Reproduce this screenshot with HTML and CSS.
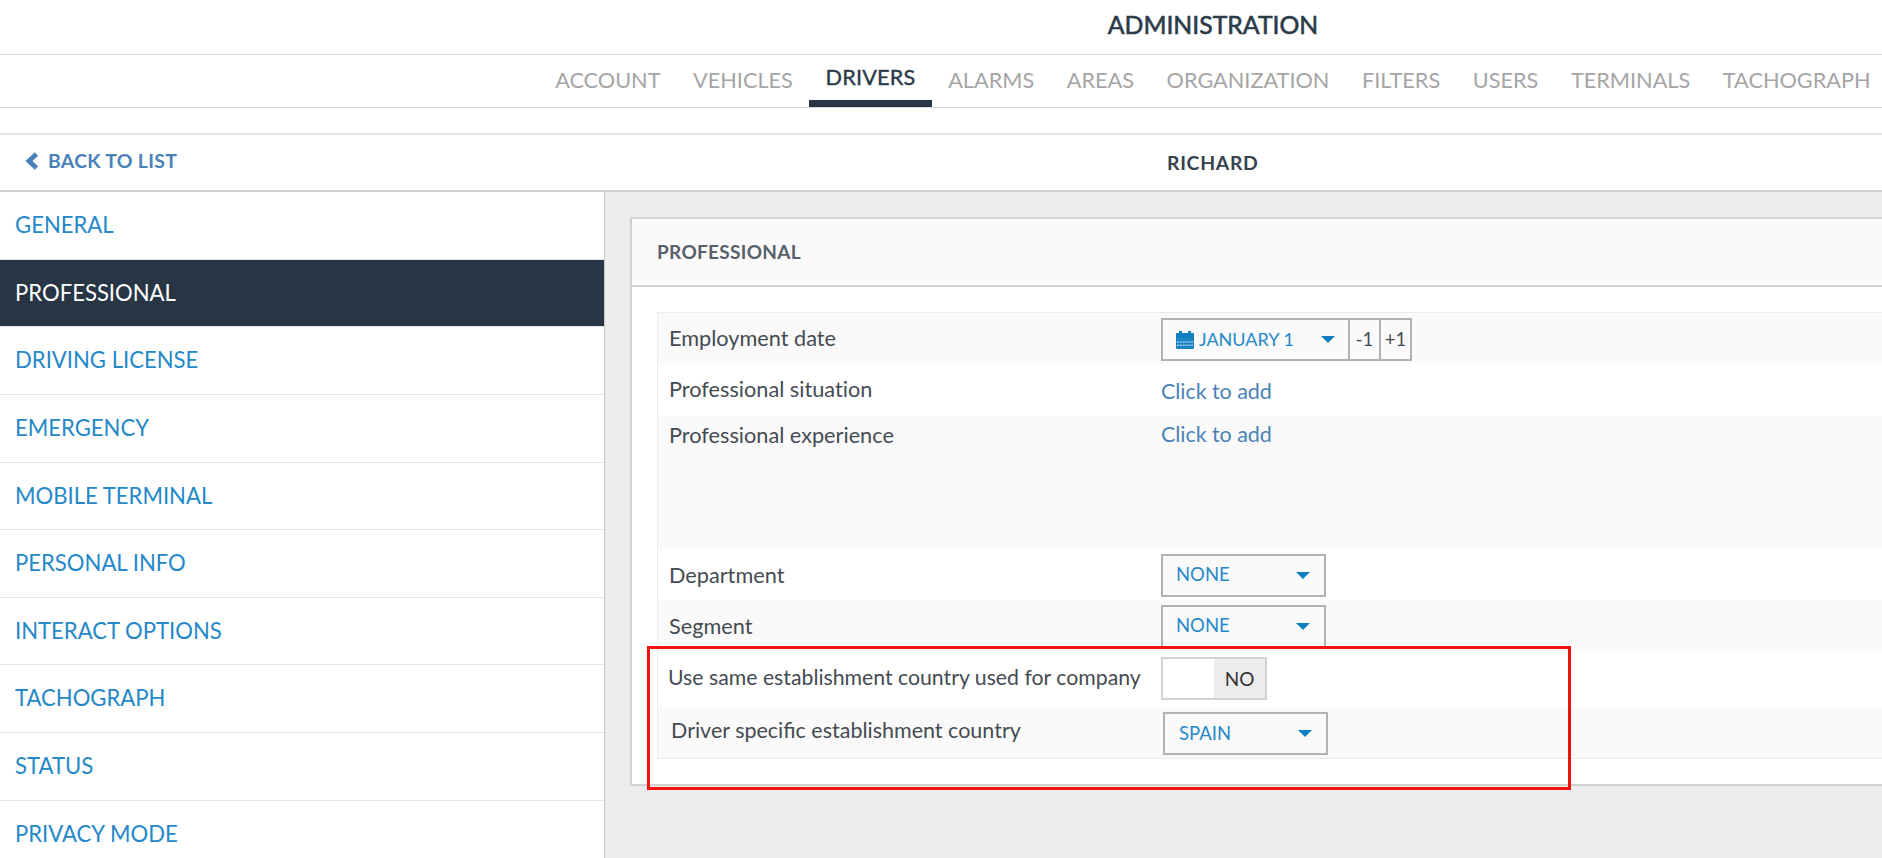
FILE: index.html
```html
<!DOCTYPE html>
<html lang="en">

<head>
    <meta charset="UTF-8">
    <meta name="viewport" content="width=device-width, initial-scale=1.0">
    <title>Administration</title>
    <link rel="stylesheet" href="styles.css">
</head>

<body>
    <header class="page-title">
        <h1>ADMINISTRATION</h1>
    </header>

    <nav class="tabs">
        <a class="tab">ACCOUNT</a>
        <a class="tab">VEHICLES</a>
        <a class="tab active">DRIVERS</a>
        <a class="tab">ALARMS</a>
        <a class="tab">AREAS</a>
        <a class="tab">ORGANIZATION</a>
        <a class="tab">FILTERS</a>
        <a class="tab">USERS</a>
        <a class="tab">TERMINALS</a>
        <a class="tab">TACHOGRAPH</a>
    </nav>

    <div class="sub-header">
        <a class="back">
            <svg class="back-icon" width="14" height="18" viewBox="0 0 14 18">
                <path d="M11.500 2L4 9l7.500 7" fill="none" stroke="currentColor" stroke-width="4.800"/>
            </svg>
            BACK TO LIST
        </a>
        <h2>RICHARD</h2>
    </div>

    <div class="main">
        <ul class="sidebar">
            <li>GENERAL</li>
            <li class="active">PROFESSIONAL</li>
            <li>DRIVING LICENSE</li>
            <li>EMERGENCY</li>
            <li>MOBILE TERMINAL</li>
            <li>PERSONAL INFO</li>
            <li>INTERACT OPTIONS</li>
            <li>TACHOGRAPH</li>
            <li>STATUS</li>
            <li>PRIVACY MODE</li>
        </ul>

        <div class="content">
            <section class="panel">
                <h3>PROFESSIONAL</h3>
                <div class="panel-body">
                    <div class="fields">
                        <div class="row row-date">
                            <div class="label">Employment date</div>
                            <div class="date">
                                <div class="date-value">
                                    <svg class="calendar" width="18" height="18" viewBox="0 0 18 18">
                                        <path d="M1 2h2V0h3v2h6V0h3v2h2q1 0 1 1v4H0V3q0-1 1-1z" fill="#0f80bf"/>
                                        <path d="M0 6.500h18V17q0 1-1 1H1q-1 0-1-1z" fill="#1a84c2"/>
                                        <path d="M1 11h16M1 14.200h16" stroke="#cfe5f3" stroke-width="1" stroke-dasharray="2 .8"/>
                                    </svg>
                                    <span>JANUARY 1</span>
                                    <i class="caret"></i>
                                </div>
                                <div class="step">-1</div>
                                <div class="step">+1</div>
                            </div>
                        </div>
                        <div class="row row-situation">
                            <div class="label">Professional situation</div>
                            <a class="add">Click to add</a>
                        </div>
                        <div class="row row-experience">
                            <div class="label">Professional experience</div>
                            <a class="add">Click to add</a>
                        </div>
                        <div class="row">
                            <div class="label">Department</div>
                            <div class="select"><span>NONE</span><i class="caret"></i></div>
                        </div>
                        <div class="row">
                            <div class="label">Segment</div>
                            <div class="select"><span>NONE</span><i class="caret"></i></div>
                        </div>
                        <div class="row row-same">
                            <div class="label">Use same establishment country used for company</div>
                            <div class="toggle"><span>NO</span></div>
                        </div>
                        <div class="row row-country">
                            <div class="label">Driver specific establishment country</div>
                            <div class="select"><span>SPAIN</span><i class="caret"></i></div>
                        </div>
                    </div>
                </div>
                <div class="highlight"></div>
            </section>
        </div>
    </div>
</body>

</html>
```
FILE: styles.css
```css
* {
    box-sizing: border-box;
}

body {
    margin: 0;
    height: 858px;
    overflow: hidden;
    display: flex;
    flex-direction: column;
    font-family: Lato, "Open Sans", sans-serif;
    background-color: #fff;
    color: #444b52;
}

h1,
h2,
h3 {
    margin: 0;
}

/* titles sit right of the window center */
.page-title {
    flex: none;
    height: 55px;
    padding-left: 544px;
    border-bottom: 1px solid #d9d9d9;
    text-align: center;
}

.page-title h1 {
    font-size: 24.8px;
    font-weight: normal;
    line-height: 50px;
    color: #2c3b49;
    -webkit-text-stroke: 0.6px #2c3b49;
}

.tabs {
    flex: none;
    display: flex;
    justify-content: flex-end;
    height: 53px;
    border-bottom: 1px solid #d9d9d9;
}

.tab {
    padding: 0 16.3px;
    font-size: 21.7px;
    line-height: 51px;
    color: #a5a5a5;
}

.tab:last-child {
    padding-right: 11.5px;
}

.tab.active {
    line-height: 44px;
    color: #2c3b49;
    letter-spacing: 0.2px;
    -webkit-text-stroke: 0.4px #2c3b49;
    border-bottom: 7px solid #283545;
}

.sub-header {
    flex: none;
    display: flex;
    align-items: center;
    height: 59px;
    margin-top: 25px;
    border-top: 2px solid #e4e4e4;
    border-bottom: 2px solid #cfcfcf;
}

.back {
    display: flex;
    align-items: center;
    gap: 9px;
    width: 1167px;
    padding: 0 0 4px 25px;
    font-size: 19.4px;
    font-weight: bold;
    letter-spacing: 0.3px;
    color: #4a82b8;
}

.sub-header h2 {
    font-size: 19.4px;
    letter-spacing: 0.7px;
    color: #36434f;
}

.main {
    flex: 1;
    min-height: 0;
    display: flex;
}

.sidebar {
    flex: none;
    width: 605px;
    margin: 0;
    padding: 0;
    list-style: none;
    border-right: 1px solid #c8c8c8;
}

.sidebar li {
    height: 67.65px;
    padding-left: 15px;
    font-size: 22.1px;
    line-height: 65px;
    color: #2588c8;
    border-bottom: 1px solid #e6e6e6;
}

.sidebar .active {
    color: #fff;
    background-color: #283545;
}

.content {
    flex: 1;
    min-width: 0;
    padding: 25px 0 0 25px;
    background-color: #ededed;
}

.panel {
    position: relative;
    height: 569px;
    background-color: #fff;
    border: 2px solid #d2d2d2;
    border-right: 0;
}

.panel h3 {
    height: 68px;
    padding-left: 25px;
    font-size: 19px;
    line-height: 66px;
    letter-spacing: 0.3px;
    color: #56616b;
    background-color: #fafafa;
    border-bottom: 2px solid #d2d2d2;
}

.panel-body {
    padding: 25px 0 0 25px;
}

.fields {
    border: 1px solid #ececec;
    border-right: 0;
}

.row {
    display: flex;
    align-items: flex-start;
    height: 51px;
    padding-top: 5px;
}

.row:nth-child(odd) {
    background-color: #fafafa;
}

.label {
    flex: none;
    width: 503px;
    padding: 8px 0 0 11px;
    font-size: 21.7px;
    line-height: 26px;
}

.row-date {
    height: 50px;
}

.row-date .label {
    padding-top: 7px;
}

.row-situation {
    height: 53px;
    font-variant-ligatures: none;
}

.row-experience {
    height: 133px;
}

.row-experience .label {
    padding-top: 1px;
}

.row-same {
    height: 56px;
}

.row-same .label {
    padding-top: 8px;
    padding-left: 10px;
    font-size: 21.25px;
}

.row-same .toggle {
    margin-top: 1px;
}

.row-country .label {
    width: 505px;
    padding-top: 5px;
    padding-left: 13px;
    font-size: 21.5px;
}

.add {
    font-size: 21.5px;
    line-height: 26px;
    color: #4a82b8;
}

.row-situation .add {
    padding-top: 10px;
}

.add {
    letter-spacing: -0.05px;
}

.date {
    display: flex;
    height: 43px;
    border: 2px solid #b0b3b5;
    font-size: 18px;
}

.date-value {
    display: flex;
    align-items: center;
    width: 185px;
    padding: 0 13px;
    color: #2588c8;
}

.date-value span {
    margin-left: 5px;
    padding-bottom: 2px;
}

.step {
    width: 31px;
    border-left: 2px solid #b0b3b5;
    font-size: 18.5px;
    line-height: 38px;
    text-align: center;
}

.select {
    display: flex;
    align-items: center;
    width: 165px;
    height: 43px;
    padding: 0 14px 0 13px;
    font-size: 18.5px;
    color: #2588c8;
    background-color: #fafafa;
    border: 2px solid #b0b3b5;
}

.select span {
    padding-bottom: 4px;
}

.row-country .select span {
    padding: 0 0 1px 1px;
}

.caret {
    margin-left: auto;
    border: 7px solid transparent;
    border-top-color: #0f80bf;
    border-bottom: 0;
}

.toggle {
    display: flex;
    justify-content: flex-end;
    width: 106px;
    height: 43px;
    background-color: #fff;
    border: 2px solid #d2d2d2;
}

.toggle span {
    width: 51px;
    font-size: 19px;
    line-height: 39px;
    text-align: center;
    color: #333;
    background-color: #ededed;
}

/* marks the establishment country settings */
.highlight {
    position: absolute;
    left: 15px;
    top: 427px;
    width: 924px;
    height: 144px;
    border: 3px solid #f50f0f;
}
```
